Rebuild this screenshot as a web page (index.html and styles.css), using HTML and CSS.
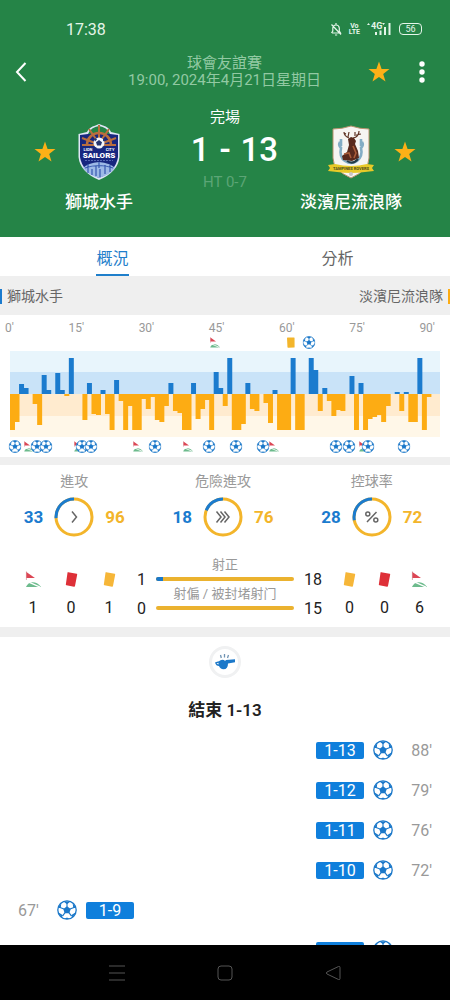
FILE: index.html
```html
<!DOCTYPE html>
<html lang="zh-Hant">
<head>
    <meta charset="UTF-8">
    <meta name="viewport" content="width=device-width, initial-scale=1.0">
    <title>獅城水手 1 - 13 淡濱尼流浪隊</title>
    <link rel="stylesheet" href="styles.css">
</head>
<body>
    <!-- shared icons -->
    <svg class="sprite" aria-hidden="true">
        <symbol id="ball" viewBox="0 0 20 20">
            <circle cx="10" cy="10" r="9.2" fill="#fff" stroke="#1b78c9" stroke-width="1.3"/>
            <path d="M10 6.2l3.7 2.700-1.400 4.300H7.700L6.300 8.900z" fill="#1b78c9"/>
            <path d="M10 7V3M13 9l4-1.500M12 12.600l2.500 3.500M8 12.600l-2.500 3.500M7 9L3 7.500" stroke="#1b78c9" stroke-width="1.100"/>
            <path d="M6.500 1.500h7L10 4.300zM15.600 3l3.600 5-2.900 0zM19.100 12l-3.600 5.500-1.400-2.200zM12.800 18.900H7.200L10 17.500zM4.500 17.500L.9 12l5 3.300zM.8 8l3.600-5-.7 5z" fill="#1b78c9"/>
        </symbol>
        <symbol id="corner" viewBox="0 0 18 18">
            <path d="M1.500 0.500v9" stroke="#d9a3a8" stroke-width="1"/>
            <path d="M1.500 1l9 6.500h-9z" fill="#dc4654"/>
            <path d="M1 17c2-5.500 10-8 16 0z" fill="#6dbb8d"/>
            <path d="M1 10.500L16 17" stroke="#fff" stroke-width="1.400"/>
        </symbol>
        <symbol id="card" viewBox="0 0 18 18">
            <path d="M5.500 1.200l9 1.800q.7.200.5.900L12.700 16q-.2.800-1 .7l-8-1.500q-.9-.2-.7-1L4.800 1.700q.1-.6.7-.5z" fill="currentColor"/>
        </symbol>
        <symbol id="star" viewBox="0 0 22 22">
            <path d="M11 .5l2.600 7.400 7.900.2-6.300 4.800 2.300 7.600L11 16l-6.500 4.500 2.300-7.600L.5 8.100l7.900-.2z" fill="#fcb017"/>
        </symbol>
    </svg>

    <div class="app">
        <header class="header">
            <div class="status-bar">
                <span class="clock">17:38</span>
                <span class="status-icons">
                    <svg width="12" height="14" viewBox="0 0 12 14" fill="none" stroke="#e4f5e9" stroke-width="1.200">
                        <path d="M2 11h8.500L9.300 9V6Q9 3 6 3T2.800 6v3L1.500 11M6 1v2M5 13h2.200M1.500 2.500l9.500 10"/>
                    </svg>
                    <span class="volte"><b>Vo</b><b>LTE</b></span>
                    <svg width="25" height="15" viewBox="0 0 25 15">
                        <path d="M0 3l1.500-2L3 3zM15 1h3l-1.500 2z" fill="#e4f5e9"/>
                        <text x="4" y="7" class="net">4G</text>
                        <path d="M9 10v3M13.500 8.500V13M18 5v8M22.500 1v12" stroke="#e4f5e9" stroke-width="2"/>
                    </svg>
                    <span class="battery">56</span>
                </span>
            </div>

            <div class="topbar">
                <button class="icon-btn" aria-label="返回">
                    <svg width="12" height="20" viewBox="0 0 12 20" fill="none" stroke="#fff" stroke-width="2"><path d="M10.500 1L2 10l8.500 9"/></svg>
                </button>
                <div class="match-info">
                    <p>球會友誼賽</p>
                    <p>19:00, 2024年4月21日星期日</p>
                </div>
                <button class="icon-btn" aria-label="收藏"><svg class="star"><use href="#star"/></svg></button>
                <button class="icon-btn more" aria-label="更多">
                    <svg width="6" height="24" viewBox="0 0 6 24" fill="#fff"><circle cx="3" cy="4" r="2.700"/><circle cx="3" cy="12" r="2.700"/><circle cx="3" cy="20" r="2.700"/></svg>
                </button>
            </div>

            <div class="match">
                <div class="team home">
                    <div class="team-row">
                        <button class="icon-btn" aria-label="收藏獅城水手"><svg class="star"><use href="#star"/></svg></button>
                        <svg class="crest" viewBox="0 0 44 58">
                            <path d="M1.500 11L10 9q2-5 8.500-6.500L22 1l4 1.500Q32 4 34 9l8.500 2v23Q41 49 22 57 3 49 1.500 34z" fill="#dfe6f7"/>
                            <path d="M3 12l8-1h22l8 1v22Q39 48 22 55 5 48 3 34z" fill="#17277f"/>
                            <path d="M11 11q3-7 11-8 8 1 11 8z" fill="#258447"/>
                            <g fill="none" stroke="#b96e3e" stroke-width="2.600">
                                <path d="M10 22a12 12 0 0 1 24 0"/>
                                <path d="M22 2v14M12 6l7 10M32 6l-7 10M5 15l13 5M39 15l-13 5M5 22h34" stroke-width="2"/>
                            </g>
                            <circle cx="22" cy="20" r="5.500" fill="#f3f5fb"/>
                            <path d="M22 17l3 2.200-1.100 3.300h-3.800L19 19.200z" fill="#26356f"/>
                            <path d="M17 16l2-1 1 1.500-2 2zM26 15l2 2-2 1.500zM18 24l2 1-2 .5zM25 24l2-1-1 2z" fill="#26356f"/>
                            <text x="11" y="28" class="crest-small" text-anchor="middle">LION</text>
                            <text x="33" y="28" class="crest-small" text-anchor="middle">CITY</text>
                            <text x="22" y="35" class="crest-name" text-anchor="middle">SAILORS</text>
                            <path d="M8 37.500h28" stroke="#5568b3" stroke-width="1" stroke-dasharray="2 1"/>
                            <path d="M6 45q5-5 16-6 11 1 16 6-5 7-16 10Q11 52 6 45z" fill="#9db9e6"/>
                            <path d="M11 41v9M15 46v6M19 43v10M23 46v8M28 42v9M33 42v7M22 39v6M8 45q14-5 28 0" stroke="#3658ae" stroke-width="1.200" fill="none"/>
                        </svg>
                    </div>
                    <h2>獅城水手</h2>
                </div>

                <div class="result">
                    <p class="state">完場</p>
                    <p class="score"><span>1</span><span>-</span><span>13</span></p>
                    <p class="half">HT 0-7</p>
                </div>

                <div class="team away">
                    <div class="team-row">
                        <svg class="crest" viewBox="0 0 46 54">
                            <path d="M5 4q9 0 18-3 9 3 18 3v29q0 12-18 20Q5 45 5 33z" fill="#f6f5f2" stroke="#b8926d" stroke-width="1"/>
                            <path d="M12 17q-2 3 1 6-2 9 4 13 6 4 12 0 6-5 4-13 3-3 1-6M13 14v7M33 14v7" fill="none" stroke="#83adc5" stroke-width="2.600"/>
                            <path d="M21 13q-5-2-5-6M18 9l-2-1M25 13q6-1 6-7M28 10l5-1M27 11V7M20 12l1-5" fill="none" stroke="#5f3425" stroke-width="1.200"/>
                            <path d="M20 14l3-2 3 1 2 3-1 3 3 7 1 7-7 3-9-1-1-4 5-4 2-7z" fill="#592a1d"/>
                            <path d="M16 29l5-1 2 5M25 21l3 7-2 5" stroke="#a95d3a" stroke-width="1.600" fill="none"/>
                            <path d="M19 36q6 4 11-2" stroke="#243b48" stroke-width="2" fill="none"/>
                            <path d="M0 40l7-1q16 4 32 0l7 1-2 3 2 3-9 1q-14 2-28 0l-9-1 2-3z" fill="#e8c928"/>
                            <text x="23" y="45" class="ribbon" text-anchor="middle">TAMPINES ROVERS</text>
                            <circle cx="23" cy="49" r="2" fill="#c9c4c5"/>
                        </svg>
                        <button class="icon-btn" aria-label="收藏淡濱尼流浪隊"><svg class="star"><use href="#star"/></svg></button>
                    </div>
                    <h2>淡濱尼流浪隊</h2>
                </div>
            </div>
        </header>

        <nav class="tabs">
            <button class="tab active"><span>概況</span></button>
            <button class="tab"><span>分析</span></button>
        </nav>

        <div class="legend">
            <span class="legend-home">獅城水手</span>
            <span class="legend-away">淡濱尼流浪隊</span>
        </div>

        <section class="momentum">
            <div class="minutes">
                <span>0'</span><span>15'</span><span>30'</span><span>45'</span><span>60'</span><span>75'</span><span>90'</span>
            </div>
            <div class="marks" id="homeMarks"></div>
            <svg class="chart" viewBox="0 0 95 86" preserveAspectRatio="none">
                <rect width="95" height="22" fill="#e8f5fc"/>
                <rect y="21" width="95" height="22" fill="#c9e3f8"/>
                <rect y="43" width="95" height="22" fill="#ffebcf"/>
                <rect y="65" width="95" height="21" fill="#fff7e8"/>
                <path id="homeBars" fill="#1b7bce"/>
                <path id="awayBars" fill="#fdac13"/>
            </svg>
            <div class="marks" id="awayMarks"></div>
        </section>

        <section class="stats">
            <div class="rings">
                <div class="ring-stat">
                    <h3>進攻</h3>
                    <div class="ring-row">
                        <b class="blue">33</b>
                        <svg class="ring" viewBox="0 0 40 40">
                            <circle cx="20" cy="20" r="18" stroke="#f3b52b"/>
                            <circle cx="20" cy="20" r="18" stroke="#1b7bce" pathLength="100" stroke-dasharray="26 74" transform="matrix(0 -1 -1 0 40 40)"/>
                            <path d="M18 14.500l4.500 5.500-4.500 5.500"/>
                        </svg>
                        <b class="yellow">96</b>
                    </div>
                </div>
                <div class="ring-stat">
                    <h3>危險進攻</h3>
                    <div class="ring-row">
                        <b class="blue">18</b>
                        <svg class="ring" viewBox="0 0 40 40">
                            <circle cx="20" cy="20" r="18" stroke="#f3b52b"/>
                            <circle cx="20" cy="20" r="18" stroke="#1b7bce" pathLength="100" stroke-dasharray="19 81" transform="matrix(0 -1 -1 0 40 40)"/>
                            <path d="M13.500 14.500l4.500 5.500-4.500 5.500M17.500 14.500l4.500 5.500-4.500 5.500M21.500 14.500l4.500 5.500-4.500 5.500"/>
                        </svg>
                        <b class="yellow">76</b>
                    </div>
                </div>
                <div class="ring-stat">
                    <h3>控球率</h3>
                    <div class="ring-row">
                        <b class="blue">28</b>
                        <svg class="ring" viewBox="0 0 40 40">
                            <circle cx="20" cy="20" r="18" stroke="#f3b52b"/>
                            <circle cx="20" cy="20" r="18" stroke="#1b7bce" pathLength="100" stroke-dasharray="28 72" transform="matrix(0 -1 -1 0 40 40)"/>
                            <path d="M24.500 15l-9.500 10M17.800 17a2 2 0 1 1-4 0 2 2 0 1 1 4 0M25.800 23a2 2 0 1 1-4 0 2 2 0 1 1 4 0"/>
                        </svg>
                        <b class="yellow">72</b>
                    </div>
                </div>
            </div>

            <div class="totals">
                <div class="counts">
                    <svg class="count-icon"><use href="#corner"/></svg>
                    <svg class="count-icon red"><use href="#card"/></svg>
                    <svg class="count-icon amber"><use href="#card"/></svg>
                    <span>1</span><span>0</span><span>1</span>
                </div>
                <div class="shots">
                    <span class="num-left">1</span>
                    <div class="shot"><h4>射正</h4><div class="bar"><i style="width: 5%"></i></div></div>
                    <span class="num-right">18</span>
                    <span class="num-left">0</span>
                    <div class="shot"><h4>射偏 / 被封堵射门</h4><div class="bar"></div></div>
                    <span class="num-right">15</span>
                </div>
                <div class="counts counts-away">
                    <svg class="count-icon amber"><use href="#card"/></svg>
                    <svg class="count-icon red"><use href="#card"/></svg>
                    <svg class="count-icon"><use href="#corner"/></svg>
                    <span>0</span><span>0</span><span>6</span>
                </div>
            </div>
        </section>

        <main class="events">
            <div class="whistle">
                <svg width="20" height="16" viewBox="0 0 20 16">
                    <path d="M0 8.500q2-.8 4-1.200Q6 5 9 6l1 1 1-1 9-.8v3l-7 1.200Q13 15 8.500 15.300 5 15 4 12 1 12 0 8.500z" fill="#1b78c9"/>
                    <path d="M5.500 1l.8 3M9.500 0v3.500M13.500 1l-1 3" stroke="#6f93b3" stroke-width="1.300"/>
                    <path d="M1.500 9.500l2-.7v1.700z" fill="#fff"/>
                </svg>
            </div>
            <h3 class="full-time">結束 1-13</h3>
            <ul>
                <li class="event away-event"><span class="minute">88'</span><svg class="ball"><use href="#ball"/></svg><span class="tag">1-13</span></li>
                <li class="event away-event"><span class="minute">79'</span><svg class="ball"><use href="#ball"/></svg><span class="tag">1-12</span></li>
                <li class="event away-event"><span class="minute">76'</span><svg class="ball"><use href="#ball"/></svg><span class="tag">1-11</span></li>
                <li class="event away-event"><span class="minute">72'</span><svg class="ball"><use href="#ball"/></svg><span class="tag">1-10</span></li>
                <li class="event"><span class="minute">67'</span><svg class="ball"><use href="#ball"/></svg><span class="tag">1-9</span></li>
                <li class="event away-event"><span class="minute"></span><svg class="ball"><use href="#ball"/></svg><span class="tag"></span></li>
            </ul>
        </main>

        <footer class="nav-bar">
            <button class="icon-btn" aria-label="選單"><svg width="16" height="16" viewBox="0 0 16 16"><path d="M0 1h16M0 8h16M0 15h16"/></svg></button>
            <button class="icon-btn" aria-label="主頁"><svg width="16" height="16" viewBox="0 0 16 16"><rect x="1" y="1" width="14" height="14" rx="3"/></svg></button>
            <button class="icon-btn" aria-label="返回"><svg width="16" height="16" viewBox="0 0 16 16"><path d="M13.500 1.500Q15 1 15 2.500v11q0 1.500-1.500 1L2 9Q.5 8 2 7z"/></svg></button>
        </footer>
    </div>

    <script>
        // pressure per minute: [minute, height]
        const home = [[2,10],[3,6],[7,19],[8,4],[10,21],[11,4],[13,36],[17,11],[20,4],[23,14],[35,11],[40,11],
            [45,22],[46,6],[48,36],[52,11],[58,4],[62,36],[66,36],[67,24],[69,6],[75,18],[77,11],[85,2],[87,2],[90,36]];
        const away = [[0,36],[1,28],[5,10],[6,31],[12,2],[16,26],[18,20],[19,21],[21,20],[22,36],[24,7],[25,36],
            [26,12],[27,36],[28,36],[29,5],[30,15],[31,3],[32,26],[33,28],[34,12],[36,17],[37,19],[38,36],[39,36],
            [41,25],[42,15],[43,6],[44,36],[47,12],[49,36],[50,36],[51,30],[53,15],[54,17],[56,9],[57,29],[59,36],
            [60,36],[61,36],[63,36],[64,36],[68,17],[70,7],[71,22],[72,16],[73,17],[76,36],[78,36],[79,25],[80,23],
            [81,21],[82,28],[83,12],[86,17],[88,28],[89,28],[91,36],[92,3]];

        function bars(data, dir) {
            return data.map(([m, h]) => `M${m} 43v${dir * h}h1.1v${-dir * h}z`).join('');
        }
        document.getElementById('homeBars').setAttribute('d', bars(home, -1));
        document.getElementById('awayBars').setAttribute('d', bars(away, 1));

        // events above and below the chart: [minute, icon]
        const homeEvents = [[45,'corner'],[62,'card'],[66,'ball']];
        const awayEvents = [[1,'ball'],[4,'corner'],[6,'ball'],[8,'ball'],[15,'corner'],[16,'ball'],[18,'ball'],
            [28,'corner'],[32,'ball'],[39,'corner'],[44,'ball'],[50,'ball'],[56,'ball'],[58,'corner'],[72,'ball'],
            [75,'ball'],[78,'corner'],[79,'ball'],[87,'ball']];

        function addMarks(id, list) {
            document.getElementById(id).innerHTML = list.map(([m, icon]) =>
                `<svg class="mark mark-${icon}" style="left: ${m / 95 * 100}%"><use href="#${icon}"/></svg>`).join('');
        }
        addMarks('homeMarks', homeEvents);
        addMarks('awayMarks', awayEvents);
    </script>
</body>
</html>
```
FILE: styles.css
```css
* {
    margin: 0;
    padding: 0;
    box-sizing: border-box;
}

body {
    font-family: Roboto, "Noto Sans CJK TC", sans-serif;
    font-size: 16px;
    color: #222;
    background: #fff;
}

button {
    font: inherit;
    color: inherit;
    background: none;
    border: none;
    cursor: pointer;
}

svg {
    display: block;
}

.sprite {
    position: absolute;
    width: 0;
    height: 0;
}

.app {
    display: flex;
    flex-direction: column;
    height: 100vh;
    overflow: hidden;
}

/* header */
.header {
    flex: none;
    background: #258447;
    color: #fff;
    padding-bottom: 23px;
}

.status-bar {
    display: flex;
    justify-content: space-between;
    align-items: center;
    padding: 18px 28px 0 66px;
    height: 40px;
}

.clock {
    font-size: 16px;
    color: #e4f5e9;
}

.status-icons {
    display: flex;
    align-items: center;
    gap: 7px;
    color: #e4f5e9;
}

.volte {
    display: flex;
    flex-direction: column;
    align-items: center;
    font-size: 7px;
    line-height: 6px;
}

.net {
    font-size: 9px;
    font-weight: bold;
    fill: #e4f5e9;
}

.battery {
    width: 23px;
    border: 1px solid #e4f5e9;
    border-radius: 4px;
    font-size: 9px;
    line-height: 10px;
    text-align: center;
}

.topbar {
    display: flex;
    align-items: center;
    height: 64px;
    padding: 0 16px 0 15px;
}

.icon-btn {
    display: flex;
    align-items: center;
    justify-content: center;
}

.match-info {
    flex: 1;
    padding-left: 54px;
    text-align: center;
    font-size: 15px;
    line-height: 17px;
    color: #92c9a3;
}

.star {
    width: 22px;
    height: 22px;
}

.more {
    width: 24px;
    margin-left: 20px;
}

.match {
    display: grid;
    grid-template-columns: 1fr 90px 1fr;
}

.team {
    padding-top: 18px;
    text-align: center;
}

.home {
    padding-left: 18px;
}

.away {
    padding-right: 18px;
}

.team-row {
    display: grid;
    grid-template-columns: 1fr 1fr 1fr;
    align-items: center;
    justify-items: center;
    height: 60px;
}

.crest {
    width: 46px;
    height: 58px;
}

.away .crest {
    grid-column: 2;
    height: 54px;
}

.crest-small {
    font-size: 4px;
    font-weight: bold;
    fill: #fff;
}

.crest-name {
    font-size: 8px;
    font-weight: 900;
    fill: #fff;
}

.ribbon {
    font-size: 4px;
    font-weight: bold;
    fill: #4b4a1e;
}

.team h2 {
    margin-top: 8px;
    font-size: 17px;
    font-weight: 500;
    line-height: 24px;
    white-space: nowrap;
}

.result {
    text-align: center;
}

.state {
    padding-top: 3px;
    font-size: 15px;
    line-height: 20px;
}

.score {
    display: grid;
    grid-template-columns: minmax(0, 1fr) auto minmax(0, 1fr);
    gap: 10px;
    font-size: 33px;
    font-weight: 500;
    line-height: 46px;
}

.score span:first-child {
    justify-self: end;
}

.half {
    font-size: 15px;
    line-height: 18px;
    padding-bottom: 2px;
    color: #5ca576;
}

/* tabs */
.tabs {
    display: flex;
    flex: none;
    height: 39px;
}

.tab {
    flex: 1;
    display: flex;
    justify-content: center;
    color: #666;
    font-size: 16px;
}

.tab span {
    line-height: 30px;
    padding-top: 7px;
    border-bottom: 2px solid transparent;
}

.tab.active span {
    color: #1f7fcb;
    border-bottom-color: #1f7fcb;
}

.legend {
    display: flex;
    flex: none;
    justify-content: space-between;
    align-items: center;
    height: 39px;
    padding-top: 2px;
    background: #efefef;
    color: #666;
    font-size: 14px;
}

.legend span {
    line-height: 15px;
    padding: 0 5px;
}

.legend-home {
    border-left: 2px solid #1b7bce;
}

.legend-away {
    border-right: 2px solid #fdac13;
}

/* momentum chart */
.momentum {
    flex: none;
    padding: 6px 10px 4px;
    border-bottom: 8px solid #efefef;
}

.minutes {
    display: flex;
    justify-content: space-between;
    margin: 0 -5px;
    padding-right: 10px;
    font-size: 12px;
    line-height: 14px;
    color: #999;
}

.marks {
    position: relative;
    height: 16px;
}

.mark {
    position: absolute;
    top: 1px;
    width: 13px;
    height: 13px;
}

.mark-ball {
    transform: translateX(-50%);
}

.mark-corner {
    width: 11px;
    transform: translateX(-40%);
}

.mark-card {
    color: #f3b52b;
    transform: translateX(-50%) rotate(-11deg);
}

.chart {
    width: 100%;
    height: 86px;
}

#awayMarks {
    margin-top: 2px;
    margin-bottom: -2px;
}

/* stats */
.stats {
    flex: none;
    padding: 6px 0;
    border-bottom: 10px solid #efefef;
}

.rings {
    display: flex;
    padding-right: 4px;
}

.ring-stat {
    flex: 1;
    text-align: center;
}

.ring-stat h3 {
    font-size: 14px;
    font-weight: 400;
    line-height: 20px;
    color: #999;
}

.ring-row {
    display: flex;
    justify-content: center;
    align-items: center;
    gap: 11px;
    margin-top: 6px;
    font-size: 17px;
}

.ring {
    width: 40px;
    height: 40px;
    fill: none;
}

.ring circle {
    stroke-width: 3;
}

.ring path {
    stroke: #666;
    stroke-width: 1.5;
}

.blue {
    color: #1b7bce;
}

.yellow {
    color: #f3b52b;
}

.totals {
    display: flex;
    margin-top: 24px;
}

.counts {
    display: grid;
    grid-template-columns: repeat(3, 38px);
    grid-template-rows: 32px 28px;
    align-items: center;
    justify-items: center;
    padding-left: 14px;
}

.counts-away {
    grid-template-columns: repeat(3, 35px);
    padding-left: 0;
    padding-right: 13px;
}

.count-icon {
    width: 17px;
    height: 17px;
    margin-top: 4px;
}

.red {
    color: #de3038;
}

.amber {
    color: #f6b638;
}

.shots {
    flex: 1;
    display: grid;
    grid-template-columns: 18px 1fr 28px;
    grid-template-rows: 31px 29px;
    align-items: end;
    column-gap: 10px;
}

.num-left {
    text-align: right;
}

.num-left,
.num-right {
    line-height: 24px;
}

.shot h4 {
    font-size: 13px;
    font-weight: 400;
    line-height: 18px;
    text-align: center;
    color: #999;
    white-space: nowrap;
}

.bar {
    height: 4px;
    margin: 3px 0 11px;
    border-radius: 2px;
    background: #ebb22f;
    overflow: hidden;
}

.bar i {
    display: block;
    height: 4px;
    background: #1b78c9;
}

/* events */
.events {
    flex: 1;
    min-height: 0;
    overflow: hidden;
}

.whistle {
    display: flex;
    align-items: center;
    justify-content: center;
    width: 32px;
    height: 32px;
    margin: 9px auto 0;
    border: 3px solid #f0f1f2;
    border-radius: 50%;
}

.full-time {
    margin-top: 20px;
    font-size: 17px;
    font-weight: 600;
    line-height: 24px;
    text-align: center;
}

.events ul {
    margin-top: 8px;
    list-style: none;
}

.event {
    display: flex;
    align-items: center;
    height: 40px;
    padding: 0 18px;
}

.away-event {
    flex-direction: row-reverse;
}

.minute {
    width: 39px;
    color: #999;
}

.away-event .minute {
    text-align: right;
}

.ball {
    width: 20px;
    height: 20px;
}

.tag {
    width: 48px;
    height: 17px;
    margin: 0 9px;
    border-radius: 2px;
    background: #0f7fdc;
    color: #fff;
    font-size: 16px;
    line-height: 17px;
    text-align: center;
}

/* system navigation */
.nav-bar {
    display: flex;
    flex: none;
    justify-content: center;
    gap: 92px;
    height: 55px;
    background: #000;
}

.nav-bar svg {
    fill: none;
    stroke: #555;
    stroke-width: 1;
}
```
